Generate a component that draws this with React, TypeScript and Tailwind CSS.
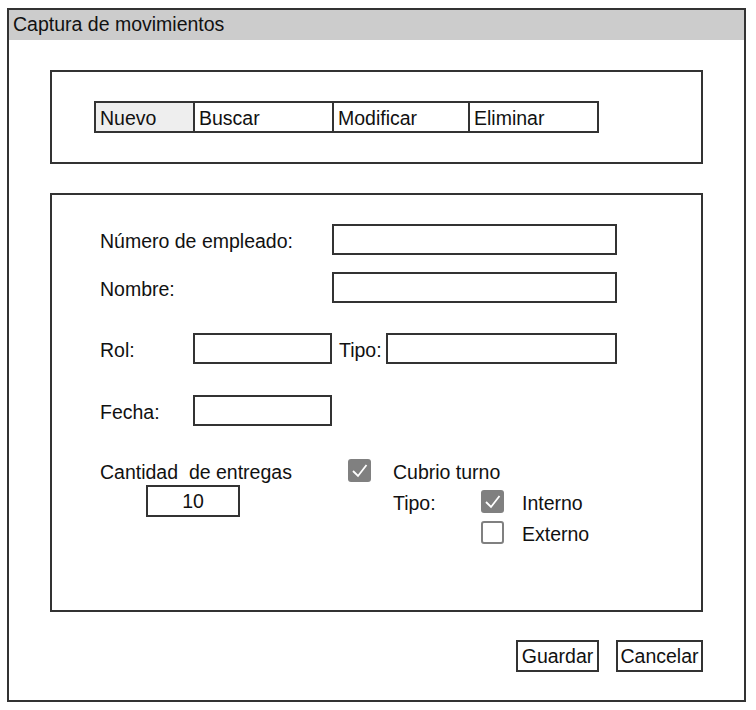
import React from "react";

const font = { fontFamily: '"Liberation Sans", Arial, sans-serif' };

function Check({ checked }: { checked: boolean }) {
  if (!checked) {
    return <div className="w-[23px] h-[23px] rounded-[3px] border-2 border-[#808080] bg-white" />;
  }
  return (
    <div className="w-[23px] h-[23px] rounded-[3px] bg-[#808080] flex items-center justify-center">
      <svg width="17" height="15" viewBox="0 0 17 15" fill="none">
        <path d="M2 8 L7 13 L15.5 2" stroke="white" strokeWidth="1.8" />
      </svg>
    </div>
  );
}

export default function App() {
  const tabs = [
    { label: "Nuevo", w: "w-[97px]", active: true },
    { label: "Buscar", w: "w-[139px]", active: false },
    { label: "Modificar", w: "w-[136px]", active: false },
    { label: "Eliminar", w: "w-[129px]", active: false },
  ];

  return (
    <div className="bg-white min-h-[710px] pt-[8px] pl-[7px] text-[19.5px] text-[#111]" style={font}>
      <div className="w-[739px] h-[694px] border-2 border-[#333] flex flex-col">
        {/* barra de titulo */}
        <div className="h-[30px] bg-[#cccccc] flex items-center pl-[4px] leading-none">
          Captura de movimientos
        </div>

        <div className="px-[41px] pt-[30px] flex flex-col">
          {/* botones de accion */}
          <div className="h-[94px] border-2 border-[#333] pl-[42px] pt-[29px]">
            <div className="flex h-[32px] border-2 border-[#333] w-fit">
              {tabs.map((t, i) => (
                <div
                  key={t.label}
                  className={`${t.w} h-full flex items-center pl-[4px] pt-[3px] ${i > 0 ? "border-l-2 border-[#333]" : ""} ${t.active ? "bg-[#eeeeee]" : "bg-white"}`}
                >
                  {t.label}
                </div>
              ))}
            </div>
          </div>

          {/* formulario */}
          <div className="mt-[29px] h-[419px] border-2 border-[#333] pl-[48px] pt-[29px]">
            <div className="flex items-center h-[31px]">
              <div className="w-[232px] translate-y-[2px]">Número de empleado:</div>
              <div className="w-[285px] h-[31px] border-2 border-[#333]" />
            </div>
            <div className="flex items-center h-[31px] mt-[17px]">
              <div className="w-[232px] translate-y-[2px]">Nombre:</div>
              <div className="w-[285px] h-[31px] border-2 border-[#333]" />
            </div>
            <div className="flex items-center h-[31px] mt-[30px]">
              <div className="w-[93px] translate-y-[2px]">Rol:</div>
              <div className="w-[139px] h-[31px] border-2 border-[#333]" />
              <div className="w-[54px] pl-[7px] translate-y-[2px]">Tipo:</div>
              <div className="w-[231px] h-[31px] border-2 border-[#333]" />
            </div>
            <div className="flex items-center h-[31px] mt-[31px]">
              <div className="w-[93px] translate-y-[2px]">Fecha:</div>
              <div className="w-[139px] h-[31px] border-2 border-[#333]" />
            </div>

            <div className="flex mt-[33px]">
              <div className="w-[248px] flex flex-col">
                <div className="h-[23px] flex items-center translate-y-[2px] whitespace-pre">Cantidad  de entregas</div>
                <div className="ml-[46px] mt-[3px] w-[94px] h-[32px] border-2 border-[#333] flex items-center justify-center pt-[2px]">
                  10
                </div>
              </div>
              <div className="flex flex-col">
                <div className="flex items-center h-[23px]">
                  <Check checked />
                  <span className="ml-[22px] translate-y-[2px]">Cubrio turno</span>
                </div>
                <div className="flex items-center h-[23px] mt-[8px]">
                  <span className="w-[133px] pl-[45px] translate-y-[2px]">Tipo:</span>
                  <Check checked />
                  <span className="ml-[18px] translate-y-[2px]">Interno</span>
                </div>
                <div className="flex items-center h-[23px] mt-[8px]">
                  <span className="w-[133px]" />
                  <Check checked={false} />
                  <span className="ml-[18px] translate-y-[2px]">Externo</span>
                </div>
              </div>
            </div>
          </div>

          {/* botones inferiores */}
          <div className="flex justify-end gap-[17px] mt-[28px]">
            <div className="w-[83px] h-[32px] border-2 border-[#333] flex items-center justify-center pt-[2px]">Guardar</div>
            <div className="w-[87px] h-[32px] border-2 border-[#333] flex items-center justify-center pt-[2px]">Cancelar</div>
          </div>
        </div>
      </div>
    </div>
  );
}
